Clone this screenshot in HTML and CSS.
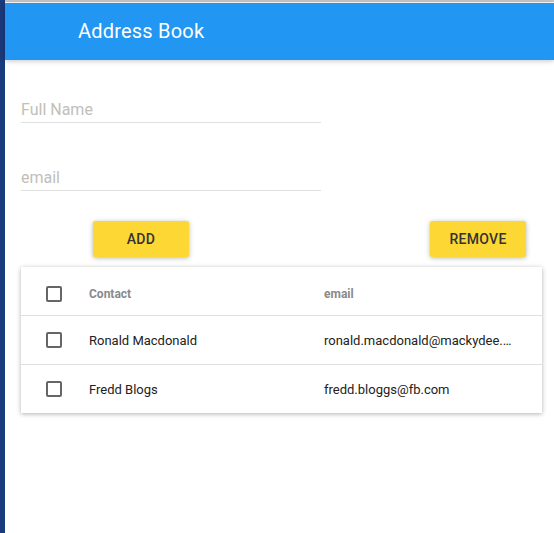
FILE: index.html
```html
<!DOCTYPE html>
<html>
<head>
<meta charset="utf-8">
<link rel="stylesheet" href="styles.css">
</head>
<body>
<div class="page">
  <div class="strip"></div>
  <div class="app">
    <div class="topline"></div>
    <header class="appbar"><h1 class="title">Address Book</h1></header>
    <main class="content">
      <div class="field field-first"><input class="input" type="text" placeholder="Full Name"></div>
      <div class="field"><input class="input" type="text" placeholder="email"></div>
      <div class="actions">
        <button class="btn">ADD</button>
        <button class="btn">REMOVE</button>
      </div>
      <div class="card">
        <div class="row head">
          <div class="cb-cell"><span class="cb"></span></div>
          <div class="cell name">Contact</div>
          <div class="cell mail">email</div>
        </div>
        <div class="row">
          <div class="cb-cell"><span class="cb"></span></div>
          <div class="cell name">Ronald Macdonald</div>
          <div class="cell mail">ronald.macdonald@mackydee.com</div>
        </div>
        <div class="row last">
          <div class="cb-cell"><span class="cb"></span></div>
          <div class="cell name">Fredd Blogs</div>
          <div class="cell mail">fredd.bloggs@fb.com</div>
        </div>
      </div>
    </main>
  </div>
</div>
</body>
</html>
```
FILE: styles.css
```css
* { box-sizing: border-box; }
html, body { margin: 0; padding: 0; height: 100%; background: #fff; }
body { font-family: Roboto, "Noto Sans", sans-serif; }
.page { display: flex; height: 533px; overflow: hidden; }
.strip { width: 5px; flex: none; background: #1b3a7c; }
.app { flex: 1; min-width: 0; display: flex; flex-direction: column; }
.topline { height: 2px; background: #c6c6c6; flex: none; }
.appbar {
  height: 57px; flex: none; background: #2196f3; margin-top: 1px;
  display: flex; align-items: center; padding-left: 73px;
  box-shadow: 0 1px 6px rgba(0,0,0,0.12), 0 1px 4px rgba(0,0,0,0.12);
  position: relative; z-index: 1;
}
.title { margin: 0; font-size: 20px; font-weight: 400; color: #fff; letter-spacing: 0.2px; padding-bottom: 1px; }
.content { padding: 0 12px 0 16px; }
.field { width: 300px; height: 26px; margin-top: 42px; border-bottom: 1px solid #e0e0e0; display: flex; }
.field-first { margin-top: 37px; }
.input {
  border: 0; outline: 0; background: transparent; padding: 0; margin: 0;
  width: 100%; height: 24px; font: 16px Roboto, sans-serif; color: #333;
}
.input::placeholder { color: #c2beb9; opacity: 1; }
.actions { display: flex; justify-content: space-between; padding: 0 16px 0 72px; margin-top: 30px; }
.btn {
  width: 96px; height: 36px; border: 0; border-radius: 2px; background: #fdd835;
  font: 500 14px Roboto, sans-serif; color: #333; letter-spacing: 0.3px;
  box-shadow: 0 1px 6px rgba(0,0,0,0.12), 0 1px 4px rgba(0,0,0,0.18); padding: 0;
}
.card {
  margin-top: 10px; width: 521px; background: #fff;
  box-shadow: 0 1px 6px rgba(0,0,0,0.12), 0 1px 4px rgba(0,0,0,0.2);
}
.row { display: flex; align-items: center; height: 49px; border-bottom: 1px solid #e0e0e0; }
.row.last { border-bottom: 0; height: 48px; }
.row.head { height: 49px; padding-top: 6px; }
.cb-cell { width: 44px; flex: none; padding-left: 25px; display: flex; }
.cb { width: 16px; height: 16px; border: 2px solid #666; border-radius: 2px; display: block; }
.cell { font-size: 13px; color: #222; padding-left: 24px; white-space: nowrap; overflow: hidden; text-overflow: ellipsis; }
.name { width: 235px; flex: none; }
.mail { flex: 1; padding-right: 26px; }
.head .cell { font-size: 12px; font-weight: 700; color: #8a8a8a; }
```
